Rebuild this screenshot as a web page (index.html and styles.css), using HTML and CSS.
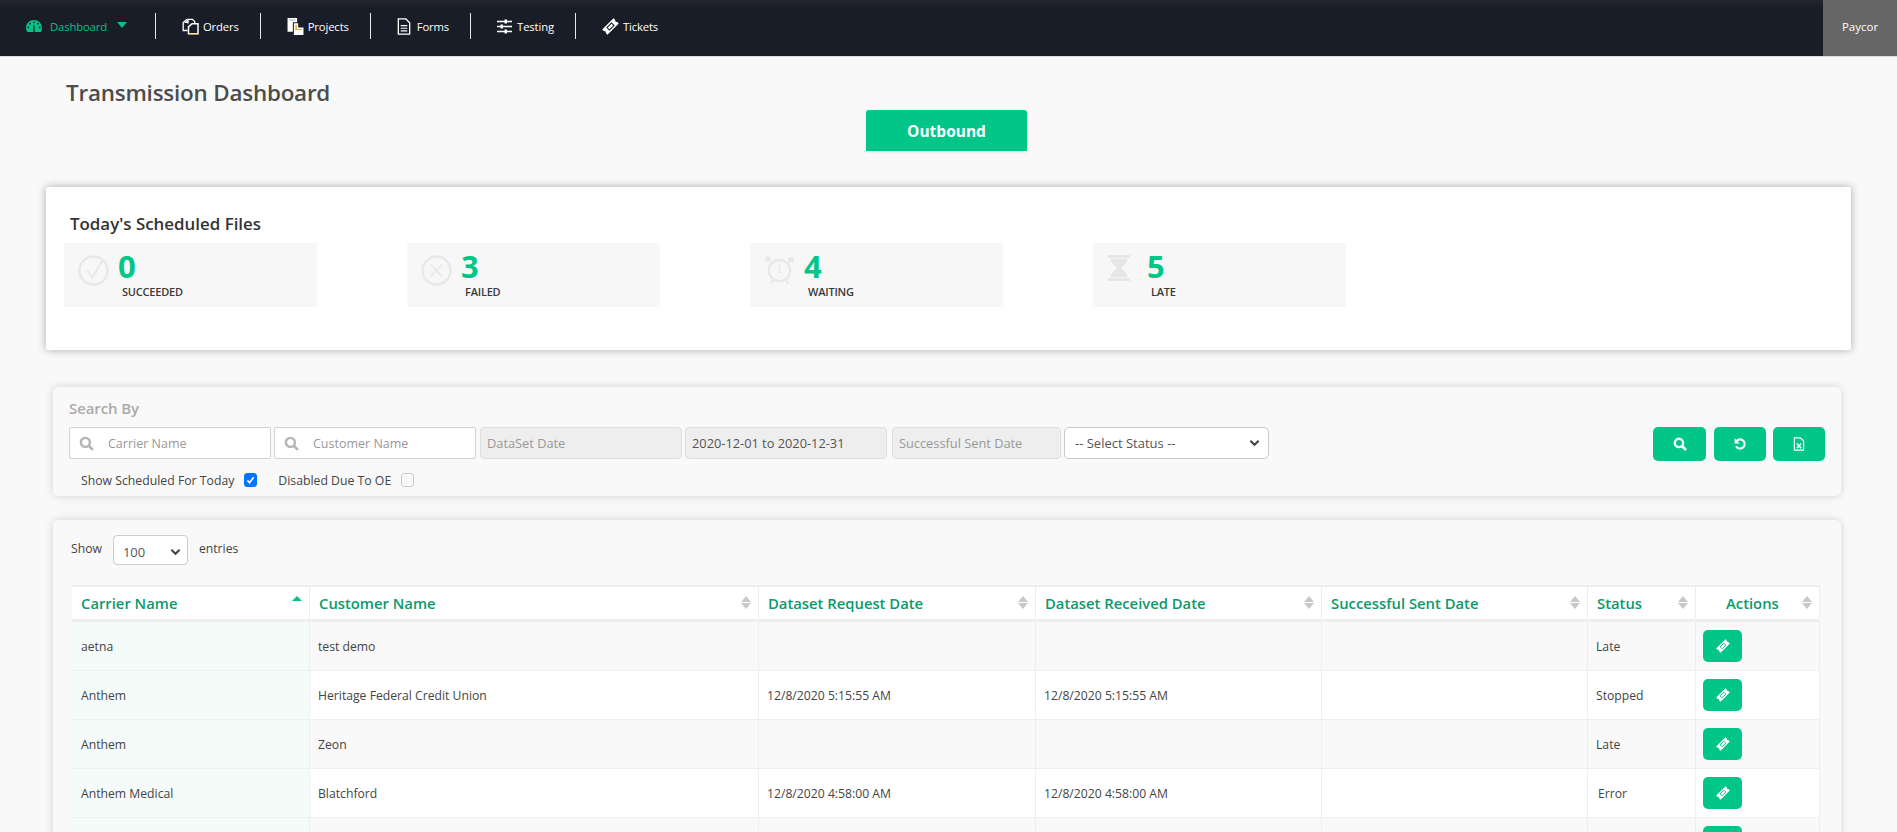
FILE: index.html
```html
<!DOCTYPE html>
<html lang="en">
<head>
<meta charset="utf-8">
<title>Transmission Dashboard</title>
<link rel="stylesheet" href="styles.css">
</head>
<body>
<svg class="sprite" width="0" height="0" aria-hidden="true">
  <symbol id="i-ticket" viewBox="0 0 16 16">
    <g transform="rotate(-45 8 8)">
      <path fill="currentColor" d="M.5 4.500H15.500V6.800a1.300 1.300 0 0 0 0 2.400V11.500H.5V9.200a1.300 1.300 0 0 0 0-2.400Z"/>
      <rect x="5" y="6.400" width="6" height="3.200" fill="none" stroke="var(--tk)" stroke-width="1"/>
    </g>
  </symbol>
  <symbol id="i-search" viewBox="0 0 16 16">
    <circle cx="6.800" cy="6.800" r="4.800" fill="none" stroke="currentColor" stroke-width="2.600"/>
    <path stroke="currentColor" stroke-width="3" stroke-linecap="round" d="M10.800 10.800 14 14"/>
  </symbol>
</svg>

<header class="nav">
  <a class="nav-item active">
    <svg class="nav-ico ico-dash" viewBox="0 0 16 12"><path fill="currentColor" d="M8 0C3.600 0 0 3.500 0 7.800c0 1.500.4 2.800 1.100 3.900.1.200.3.300.5.300h12.800c.2 0 .4-.1.500-.3.700-1.100 1.100-2.400 1.100-3.900C16 3.500 12.400 0 8 0Z"/><g fill="#1a1e28"><circle cx="8" cy="2.300" r=".9"/><circle cx="4.100" cy="3.700" r=".9"/><circle cx="11.900" cy="3.700" r=".9"/><circle cx="2.300" cy="7.400" r=".9"/><circle cx="13.700" cy="7.400" r=".9"/><path d="M7.300 12 7.500 5h1l.2 7Z"/></g></svg>
    Dashboard
    <span class="caret"></span>
  </a>
  <a class="nav-item">
    <svg class="nav-ico" viewBox="0 0 17 16"><path fill="none" stroke="currentColor" stroke-width="1.300" d="M6 5V.8h4.500l2.200 2.200v2M5.500 12H1.200V4L5 .8"/><path fill="currentColor" d="M6 1 2 4.400h4Z"/><path fill="none" stroke="currentColor" stroke-width="1.500" d="M10 5.200h6v10H6.500V8.400Z"/><path fill="none" stroke="#e8a33a" stroke-width=".8" d="M7 15.600h9.500"/></svg>
    Orders
  </a>
  <a class="nav-item">
    <svg class="nav-ico" viewBox="2 1 15 16"><path fill="currentColor" d="M2 1h9v4H7v9H2Z"/><path fill="#b9bcc4" d="M3.500 2.200h6v1.200h-6Z"/><path fill="currentColor" d="M8 6h4v4h5v7H8Z"/><path fill="#e8a33a" d="M9.300 7.300h1.500v4h4.800v1H9.300Z"/></svg>
    Projects
  </a>
  <a class="nav-item">
    <svg class="nav-ico ico-form" viewBox="0 0 14 18"><path fill="none" stroke="currentColor" stroke-width="1.400" d="M1 1h8l4 4v12H1Z"/><path fill="currentColor" d="M3.500 7.500h7v1.300h-7Zm0 2.700h7v1.300h-7Zm0 2.700h7v1.300h-7Z"/></svg>
    Forms
  </a>
  <a class="nav-item">
    <svg class="nav-ico ico-test" viewBox="0 0 15 15"><path fill="none" stroke="currentColor" stroke-width="1.400" d="M0 2.500h15M0 7.500h15M0 12.500h15"/><path fill="currentColor" d="M7.500.5h2.500v4H7.500ZM3.500 5.500H6v4H3.500ZM7.500 10.500h2.500v4H7.500Z"/></svg>
    Testing
  </a>
  <a class="nav-item nav-last">
    <svg class="nav-ico"><use href="#i-ticket"/></svg>
    Tickets
  </a>
  <div class="nav-user">Paycor</div>
</header>

<main class="page">
  <div class="title-row">
    <h1 class="page-title">Transmission Dashboard</h1>
    <button class="tab-btn">Outbound</button>
  </div>

  <section class="summary">
    <h2 class="summary-title">Today's Scheduled Files</h2>
    <div class="tiles">
      <div class="tile">
        <svg class="tile-ico" viewBox="0 0 32 32"><circle cx="16" cy="16" r="14.500" fill="none" stroke="#e8e8e8" stroke-width="2.500"/><path fill="none" stroke="#e8e8e8" stroke-width="2" d="M9.500 15.500 15 23 25 6"/></svg>
        <div class="tile-body"><div class="tile-num">0</div><div class="tile-label">SUCCEEDED</div></div>
      </div>
      <div class="tile">
        <svg class="tile-ico" viewBox="0 0 32 32"><circle cx="16" cy="16" r="14.500" fill="none" stroke="#e8e8e8" stroke-width="2.500"/><path fill="none" stroke="#e8e8e8" stroke-width="2" d="M10 10l12 12M22 10 10 22"/></svg>
        <div class="tile-body"><div class="tile-num">3</div><div class="tile-label">FAILED</div></div>
      </div>
      <div class="tile">
        <svg class="tile-ico" viewBox="0 0 32 32"><circle cx="16" cy="16" r="11" fill="none" stroke="#e8e8e8" stroke-width="2.500"/><path fill="none" stroke="#e8e8e8" stroke-width="1.500" d="M16 10v7l2 2"/><path fill="none" stroke="#e8e8e8" stroke-width="2" d="M9 26l-2 4M23 26l2 4"/><circle cx="4" cy="4" r="2.800" fill="#e8e8e8"/><path fill="#e8e8e8" d="M25 2l6 0v6l-3-1-3 1Z"/></svg>
        <div class="tile-body"><div class="tile-num">4</div><div class="tile-label">WAITING</div></div>
      </div>
      <div class="tile tile-wide">
        <svg class="tile-ico tile-ico-glass" viewBox="0 0 24 28"><path fill="#e6e6e6" d="M0 0h24v3H0ZM0 25h24v3H0ZM3 4h18c0 5-5 7-6.500 10C16 17 21 19 21 24H3c0-5 5-7 6.500-10C8 11 3 9 3 4Z"/></svg>
        <div class="tile-body"><div class="tile-num">5</div><div class="tile-label">LATE</div></div>
      </div>
    </div>
  </section>

  <section class="card search">
    <h3 class="search-title">Search By</h3>
    <div class="search-row">
      <label class="input ico-input"><svg class="input-ico"><use href="#i-search"/></svg><span>Carrier Name</span></label>
      <label class="input ico-input"><svg class="input-ico"><use href="#i-search"/></svg><span>Customer Name</span></label>
      <div class="input disabled w-date placeholder">DataSet Date</div>
      <div class="input disabled w-date">2020-12-01 to 2020-12-31</div>
      <div class="input disabled w-sent placeholder">Successful Sent Date</div>
      <div class="select-box">-- Select Status --<svg class="chev" viewBox="0 0 12 8"><path fill="none" stroke="currentColor" stroke-width="2.200" d="M1.500 1.500 6 6l4.500-4.500"/></svg></div>
      <div class="actions">
        <button class="btn btn-a"><svg class="btn-ico"><use href="#i-search"/></svg></button>
        <button class="btn"><svg class="btn-ico" viewBox="0 0 16 16"><path fill="none" stroke="currentColor" stroke-width="2.400" d="M3.800 4.800A5.300 5.300 0 1 1 3.400 10.500"/><path fill="currentColor" d="M1.800 1.500v6h6Z"/></svg></button>
        <button class="btn"><svg class="btn-ico" viewBox="0 0 16 16"><path fill="none" stroke="currentColor" stroke-width="1.300" d="M2.700 1h7l3.600 3.600V15H2.700Z"/><path fill="none" stroke="currentColor" stroke-width="1.700" d="M5.500 7.500 10.500 12.800M10.500 7.500 5.500 12.800"/></svg></button>
      </div>
    </div>
    <div class="check-row">
      <span>Show Scheduled For Today</span><span class="check on"><svg viewBox="0 0 14 14"><path fill="none" stroke="#fff" stroke-width="2" d="M3 7.500 5.800 10.500 11 3.500"/></svg></span>
      <span class="check-second">Disabled Due To OE</span><span class="check check-off"></span>
    </div>
  </section>

  <section class="card list">
    <div class="length"><span>Show</span><span class="length-select">100<svg class="chev" viewBox="0 0 12 8"><path fill="none" stroke="currentColor" stroke-width="2.200" d="M1.500 1.500 6 6l4.500-4.500"/></svg></span><span>entries</span></div>
    <table class="grid">
      <colgroup><col class="c1"><col class="c2"><col class="c3"><col class="c4"><col class="c5"><col class="c6"><col class="c7"></colgroup>
      <thead>
        <tr>
          <th class="sorted">Carrier Name<span class="sort"><i class="up"></i></span></th>
          <th>Customer Name<span class="sort"><i class="up"></i><i class="down"></i></span></th>
          <th>Dataset Request Date<span class="sort"><i class="up"></i><i class="down"></i></span></th>
          <th>Dataset Received Date<span class="sort"><i class="up"></i><i class="down"></i></span></th>
          <th>Successful Sent Date<span class="sort"><i class="up"></i><i class="down"></i></span></th>
          <th>Status<span class="sort"><i class="up"></i><i class="down"></i></span></th>
          <th class="center">Actions<span class="sort"><i class="up"></i><i class="down"></i></span></th>
        </tr>
      </thead>
      <tbody>
        <tr><td>aetna</td><td>test demo</td><td></td><td></td><td></td><td>Late</td><td><button class="btn-row"><svg class="row-ico"><use href="#i-ticket"/></svg></button></td></tr>
        <tr><td>Anthem</td><td>Heritage Federal Credit Union</td><td>12/8/2020 5:15:55 AM</td><td>12/8/2020 5:15:55 AM</td><td></td><td>Stopped</td><td><button class="btn-row"><svg class="row-ico"><use href="#i-ticket"/></svg></button></td></tr>
        <tr><td>Anthem</td><td>Zeon</td><td></td><td></td><td></td><td>Late</td><td><button class="btn-row"><svg class="row-ico"><use href="#i-ticket"/></svg></button></td></tr>
        <tr><td>Anthem Medical</td><td>Blatchford</td><td>12/8/2020 4:58:00 AM</td><td>12/8/2020 4:58:00 AM</td><td></td><td><span class="pad">Error</span></td><td><button class="btn-row"><svg class="row-ico"><use href="#i-ticket"/></svg></button></td></tr>
        <tr><td></td><td></td><td></td><td></td><td></td><td></td><td><button class="btn-row"><svg class="row-ico"><use href="#i-ticket"/></svg></button></td></tr>
      </tbody>
    </table>
  </section>
</main>
</body>
</html>
```

FILE: styles.css
```css
* { box-sizing: border-box; }
html, body { margin: 0; height: 832px; overflow: hidden; }
body { background: #f9f9f9; color: #444; font-family: "Open Sans", "Noto Sans", sans-serif; font-size: 12px; }
.sprite { position: absolute; }
h1, h2, h3 { margin: 0; }

.nav { --tk: #191d27; display: flex; align-items: flex-start; height: 57px; padding-left: 26px; background: linear-gradient(#23262f, #191d27 8px); border-bottom: 1px solid #dedede; color: #fff; }
.nav-item { display: flex; align-items: center; gap: 4px; height: 26px; margin-top: 13px; padding: 0 21px 0 26px; border-right: 1px solid #e8e8e8; font-size: 11.3px; letter-spacing: -.15px; }
.nav-item.active { padding: 0 28px 0 0; gap: 8px; color: #06c286; }
.nav-last { border-right: 0; }
.nav-ico { width: 17px; height: 17px; flex: none; }
.ico-dash { width: 16px; height: 12px; }
.ico-form { width: 14px; height: 17px; margin-right: 2px; }
.ico-test { width: 15px; height: 15px; margin-right: 1px; }
.caret { width: 0; height: 0; margin: 0 0 2px 2px; border: 5px solid transparent; border-top: 6px solid #06c286; border-bottom: 0; }
.nav-user { margin-left: auto; align-self: stretch; width: 74px; padding-bottom: 3px; display: flex; align-items: center; justify-content: center; background: #666; font-size: 11.5px; }

.page { padding: 0 46px; }
.title-row { position: relative; height: 130px; }
.page-title { padding: 22px 0 0 20px; font-size: 22.4px; font-weight: 600; line-height: 28px; color: #4c4c4c; letter-spacing: -.2px; }
.tab-btn { position: absolute; left: 820px; top: 53px; width: 161px; height: 41px; border: 0; border-radius: 3px 3px 0 0; background: #02c588; box-shadow: 0 1px 3px rgba(0,0,0,.1); color: #fff; font: 700 15.5px "Open Sans", sans-serif; }

.summary { width: 1805px; height: 163px; padding: 26px 18px 0; background: #fff; border-radius: 2px; box-shadow: 0 0 8px rgba(0,0,0,.32); }
.summary-title { padding-left: 6px; font-size: 16.9px; font-weight: 600; line-height: 22px; color: #333; }
.tiles { display: flex; gap: 90px; margin-top: 8px; }
.tile { display: flex; width: 253px; height: 64px; padding: 12px 0 0 14px; background: #f7f7f7; }
.tile-ico { width: 31px; height: 31px; flex: none; }
.tile-ico-glass { width: 24px; height: 26px; margin-right: 16px; }
.tile-body { margin-left: 9px; }
.tile-wide .tile-body { margin-left: 0; }
.tile-num { margin-top: -1px; font-size: 31px; font-weight: 700; line-height: 25px; color: #02c588; }
.tile-label { margin: 6px 0 0 4px; font-size: 11px; font-weight: 600; line-height: 14px; color: #3a3a3a; letter-spacing: -.2px; }

.card { margin-left: 7px; width: 1788px; background: #f9f9f9; border-radius: 5px; box-shadow: 0 0 8px rgba(0,0,0,.16); }
.search { height: 109px; margin-top: 37px; padding: 11px 16px 0; }
.search-title { font-size: 15px; font-weight: 600; line-height: 20px; color: #aaa; letter-spacing: -.1px; }
.search-row { display: flex; height: 34px; margin-top: 9px; }
.input { display: flex; align-items: center; width: 202px; height: 32px; margin-right: 3px; padding: 0 7px; border: 1px solid #ced4da; border-radius: 2px; background: #fff; color: #999; font-size: 12.5px; }
.ico-input span { margin-left: 14px; }
.input-ico { width: 15px; height: 15px; margin-left: 2px; color: #b5b5b5; flex: none; }
.disabled { background: #eee; border-color: #dcdfe2; border-radius: 4px; color: #555; font-size: 12.8px; padding-left: 6px; }
.w-date { width: 202px; }
.ico-input + .disabled { margin-left: 1px; }
.w-sent { width: 169px; margin-left: 2px; }
.placeholder { color: #999; }
.select-box { display: flex; align-items: center; justify-content: space-between; width: 205px; height: 32px; padding: 0 8px 0 10px; border: 1px solid #c8c8c8; border-radius: 5px; background: #fff; color: #555; font-size: 13px; }
.chev { width: 11px; height: 8px; color: #444; }
.actions { display: flex; margin-left: auto; gap: 7px; }
.btn { display: flex; align-items: center; justify-content: center; width: 52px; height: 34px; padding: 0; border: 0; border-radius: 5px; background: #02c588; color: #fff; }
.btn-a { width: 53px; margin-right: 1px; }
.btn-ico { width: 14px; height: 14px; }
.check-row { display: flex; align-items: center; height: 20px; margin-top: 9px; padding-left: 12px; font-size: 12.25px; color: #444; }
.check { display: flex; width: 13px; height: 14px; margin-left: 10px; border: 1px solid #ccc; border-radius: 3px; background: #f9f9f9; }
.check.on { background: #0075ff; border-color: #0075ff; }
.check svg { width: 100%; height: 100%; }
.check-second { margin-left: 21px; }

.list { height: 400px; margin-top: 24px; padding: 15px 16px 0 18px; }
.length { display: flex; align-items: flex-start; height: 30px; font-size: 12.2px; line-height: 28px; color: #444; }
.length-select { display: flex; align-items: center; justify-content: space-between; width: 75px; height: 30px; margin: 0 11px; padding: 3px 6px 0 9px; border: 1px solid #ccc; border-radius: 4px; background: #fff; color: #555; font-size: 13px; }
.grid { width: 1748px; margin: 20px 0 0 1px; border-collapse: separate; border-spacing: 0; table-layout: fixed; font-size: 12.2px; }
.c1 { width: 237px; } .c2 { width: 449px; } .c3 { width: 277px; } .c4 { width: 286px; } .c5 { width: 266px; } .c6 { width: 108px; } .c7 { width: 125px; }
th { position: relative; height: 37px; padding: 0 8px 0 9px; background: #fff; border-top: 2px solid #eee; border-left: 1px solid #eee; border-bottom: 3px solid #eee; color: #0a9a6c; font-size: 14.8px; font-weight: 600; text-align: left; white-space: nowrap; }
th:first-child { border-left: 0; }
th:last-child { border-right: 1px solid #eee; }
th.center { padding-left: 30px; }
.sort { position: absolute; right: 7px; top: 9px; display: flex; flex-direction: column; gap: 1px; }
.sort i { display: block; width: 0; height: 0; border: 5px solid transparent; }
.sort .up { border-top: 0; border-bottom: 6px solid #c8c8c8; }
.sort .down { border-bottom: 0; border-top: 6px solid #c8c8c8; }
.sorted .up { border-bottom-color: #06c286; border-bottom-width: 5px; }
td { height: 49px; padding: 0 8px; border-bottom: 1px solid #edf0f0; border-left: 1px solid #edf0f0; background: #fff; color: #444; white-space: nowrap; }
td:first-child { border-left: 0; padding-left: 9px; background: #f5fbf9; }
td:last-child { border-right: 1px solid #edf0f0; padding-left: 7px; }
tbody tr:nth-child(odd) td { background: #f9f9f9; }
tbody tr:nth-child(odd) td:first-child { background: #f5fbf9; }
.pad { padding-left: 2px; }
.btn-row { --tk: #02c588; display: flex; align-items: center; justify-content: center; width: 39px; height: 32px; padding: 0; border: 0; border-radius: 5px; background: #02c588; color: #fff; }
.row-ico { width: 14px; height: 14px; }
```
